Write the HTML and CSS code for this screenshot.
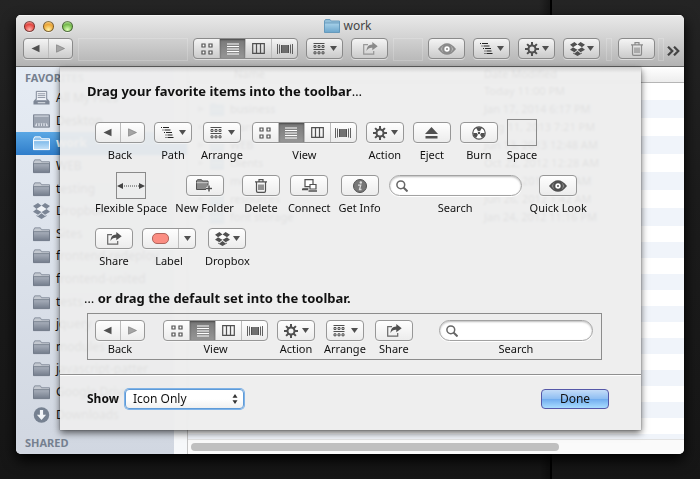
FILE: index.html
```html
<!DOCTYPE html>
<html lang="en">
<head>
<meta charset="utf-8">
<title>work</title>
<link rel="stylesheet" href="styles.css">
</head>
<body>
<svg class="defs" aria-hidden="true">
  <defs>
    <linearGradient id="steel" x1="0" y1="0" x2="0" y2="1"><stop offset="0" stop-color="#a9b0bc"/><stop offset="1" stop-color="#747d8c"/></linearGradient>
    <linearGradient id="sky" x1="0" y1="0" x2="0" y2="1"><stop offset="0" stop-color="#a8d2ea"/><stop offset="1" stop-color="#6ba5cb"/></linearGradient>
    <linearGradient id="pale" x1="0" y1="0" x2="0" y2="1"><stop offset="0" stop-color="#7db9ea"/><stop offset="1" stop-color="#c4e1f8"/></linearGradient>
  </defs>
  <symbol id="left" viewBox="0 0 9 9"><path d="M.5 4.500 8.500.8v7.400z" fill="currentColor"/></symbol>
  <symbol id="right" viewBox="0 0 9 9"><path d="M8.500 4.500.5.8v7.400z" fill="#a5a5a5" stroke="#777" stroke-width=".6"/></symbol>
  <symbol id="caret" viewBox="0 0 7 5"><path d="M0 0h7L3.500 5z" fill="currentColor"/></symbol>
  <symbol id="grid" viewBox="0 0 12 12"><path d="M1 1h3v3H1zM8 1h3v3H8zM1 8h3v3H1zM8 8h3v3H8z" fill="#fff" stroke="currentColor" stroke-width="1.200"/></symbol>
  <symbol id="list" viewBox="0 0 12 12"><path d="M0 1h12M0 3.500h12M0 6h12M0 8.500h12M0 11h12" stroke="currentColor"/></symbol>
  <symbol id="columns" viewBox="0 0 13 11"><path d="M.7.7h11.600v9.600H.7zM4.500.5v10M8.500.5v10" fill="none" stroke="currentColor" stroke-width="1.200"/></symbol>
  <symbol id="flow" viewBox="0 0 16 10"><path d="M.5 0v10M2.500.5v9M13.500.5v9M15.500 0v10" stroke="currentColor" stroke-width=".9"/><path d="M4 1h8v8H4z" fill="currentColor" opacity=".8"/><path d="M4.500 1v8M11.500 1v8" stroke="currentColor"/></symbol>
  <symbol id="arrange" viewBox="0 0 12 12"><path d="M.5.500h11M.5 6.500h11" stroke="currentColor"/><path d="M1 2.500h2v2H1zM5 2.500h2v2H5zM9 2.500h2v2H9zM1 8.800h2v2H1zM5 8.800h2v2H5zM9 8.800h2v2H9z" fill="none" stroke="currentColor"/></symbol>
  <symbol id="share" viewBox="0 0 16 13"><path d="M6 2.600H1.700v9.500h10V9" fill="none" stroke="currentColor" stroke-width="1.200" opacity=".85"/><path d="M10.300 0 15.700 4.200l-5.400 4V5.800C7.500 5.600 6 6.700 4.500 9 4.700 5.200 6.500 2.600 10.300 2.500z" fill="currentColor"/></symbol>
  <symbol id="eye" viewBox="0 0 18 12"><path d="M0 6C3 2 6 .2 9 .2S15 2 18 6c-3 4-6 5.800-9 5.800S3 10 0 6z" fill="currentColor"/><path d="M2.500 6C4 3.500 5 2.700 5.800 2.300A5 5 0 0 0 5.800 9.700C5 9.300 4 8.500 2.500 6zM15.500 6C14 3.500 13 2.700 12.200 2.300A5 5 0 0 1 12.200 9.700C13 9.300 14 8.500 15.500 6z" fill="#fff" opacity=".35"/><circle cx="9" cy="6" r="2.700" fill="#fff"/><circle cx="9" cy="6" r="1" fill="currentColor"/></symbol>
  <symbol id="path" viewBox="0 0 13 11"><path d="M0 .5h1M2 .5h6M1.500 3h1M3.500 3h6M3 5.500h1M5 5.500h6M4.500 8h1M6.500 8h5M4.500 10.500h1M6.500 10.500h6" stroke="#222" stroke-width="1.200"/></symbol>
  <symbol id="gear" viewBox="0 0 14 14"><path d="M7 0v3.500M7 10.500V14M0 7h3.500M10.500 7H14M2.100 2.100l2.400 2.400M9.500 9.500l2.400 2.400M11.900 2.100 9.500 4.500M4.500 9.500l-2.400 2.400" stroke="currentColor" stroke-width="2"/><circle cx="7" cy="7" r="3.500" fill="none" stroke="currentColor" stroke-width="2"/></symbol>
  <symbol id="dropbox" viewBox="0 0 16 15"><path d="M4.700 0 8 2.600 3.300 5.500 0 2.900zM11.300 0 8 2.600l4.700 2.900L16 2.900zM0 8.200l3.300-2.700L8 8.400 4.700 11zM16 8.200l-3.300-2.700L8 8.400l3.300 2.600zM8 9.600l3.300 2.600 1.400-.9v1L8 15l-4.700-2.700v-1l1.400.9z" fill="currentColor"/><path d="m3.300 5.500 4.700 2.900 4.700-2.900L8 2.600z" fill="#fff" opacity=".5"/></symbol>
  <symbol id="trash" viewBox="0 0 12 14"><path d="M0 2.800h12M4 2.500V.7h4v1.800M1.500 3v9q0 1.300 1.300 1.300h6.400q1.300 0 1.300-1.300V3M4 5.500v5.500M6 5.500v5.500M8 5.500v5.500" fill="none" stroke="currentColor" stroke-width="1.200"/></symbol>
  <symbol id="eject" viewBox="0 0 13 12"><path d="M6.500 0 13 7H0zM.5 9h12v2.500H.5z" fill="currentColor"/></symbol>
  <symbol id="burn" viewBox="0 0 14 14"><circle cx="7" cy="7" r="6.200" fill="#fff" stroke="currentColor" stroke-width="1.200"/><path d="M7 7 4.200 2A5.800 5.800 0 0 1 9.800 2zM7 7h5.800A5.800 5.800 0 0 1 10 12zM7 7H1.200A5.800 5.800 0 0 0 4 12z" fill="currentColor"/><circle cx="7" cy="7" r="1.700" fill="currentColor" stroke="#fff" stroke-width=".8"/></symbol>
  <symbol id="newfolder" viewBox="0 0 17 13"><path d="M.5 10.500V2l1-1.300h4L6.500 2h5.500v8.500z" fill="#8a8a8a" stroke="currentColor"/><path d="M.5 3.700H12" stroke="#ddd" stroke-width=".8"/><path d="M13 6.500v6M10 9.500h6" stroke="#fff" stroke-width="3"/><path d="M13 6.500v6M10 9.500h6" stroke="currentColor" stroke-width="1.500"/></symbol>
  <symbol id="connect" viewBox="0 0 15 13"><path d="M3 .7h8v7H3zM.5 9.800h6" fill="#fff" stroke="currentColor" stroke-width="1.200"/><path d="M8 5.500h6v4.500H8z" fill="#fff" stroke="currentColor" stroke-width="1.200"/><path d="M0 10.500h6M6.500 12h8.500" stroke="currentColor" stroke-width="1.400"/></symbol>
  <symbol id="info" viewBox="0 0 14 14"><circle cx="7" cy="7" r="6.500" fill="#777" stroke="currentColor"/><circle cx="7.800" cy="3.500" r="1.200" fill="#ddd"/><path d="M5 6.200h2.700L6.500 10.500h2" fill="none" stroke="#ddd" stroke-width="1.300"/></symbol>
  <symbol id="lens" viewBox="0 0 12 12"><circle cx="4.800" cy="4.800" r="3.900" fill="none" stroke="currentColor" stroke-width="1.500"/><path d="m7.500 7.500 4 4" stroke="currentColor" stroke-width="2"/></symbol>
  <symbol id="stretch" viewBox="0 0 28 8"><path d="M0 4 6 1v6zM28 4l-6-3v6z" fill="currentColor"/><path d="M5 4h18" stroke="currentColor" stroke-dasharray="1 1"/></symbol>
  <symbol id="updown" viewBox="0 0 6 10"><path d="M.5 3.800 3 0l2.500 3.800zM.5 6.200 3 10l2.500-3.800z" fill="currentColor"/></symbol>
  <symbol id="folder" viewBox="0 0 18 16"><path d="M.5 14.500V4L1.800 1.500h6L9 3.500h8.500v11z" fill="#c3c8d0" stroke="#858d9b"/><path d="M.5 5.500h17v9.500H.5z" fill="url(#steel)" stroke="#6c7584" stroke-width=".8"/></symbol>
  <symbol id="folder-open" viewBox="0 0 18 16"><path d="M.5 14.500V4L1.800 1.500h6L9 3.500h8.500v11z" fill="#8fc2ec" stroke="#fff"/><path d="M.5 5.500h17v9.500H.5z" fill="url(#pale)" stroke="#fff"/></symbol>
  <symbol id="folder-blue" viewBox="0 0 16 14"><path d="M.5 13V2L1.500.5h4.500L7.200 2h8.300v11z" fill="#93bfd9" stroke="#6a9cbd"/><path d="M.5 4h15v9.500H.5z" fill="url(#sky)" stroke="#5f94b8" stroke-width=".8"/></symbol>
  <symbol id="allfiles" viewBox="0 0 18 16"><path d="M3.500 10V1h11v9" fill="#eef1f6" stroke="#7b8493"/><path d="M5 3.500h8M5 5.500h8M5 7.500h8" stroke="#8e96a4"/><path d="M3 8.500.5 11.500v3.500h17v-3.500L15 8.500v2H3z" fill="#7e8796"/><path d="M5 13h8" stroke="#e5e9ef"/></symbol>
  <symbol id="desktop" viewBox="0 0 18 16"><path d="M.5 1.500h17v13H.5z" fill="#9ba3b0" stroke="#7a8392"/><path d="M1.500 2.800h15" stroke="#dde2ea"/><path d="m2 13.500 1.500-3h11l1.500 3z" fill="#dbe0e8"/><path d="M5 10.500v3M7.700 10.500v3M10.300 10.500v3M13 10.500v3" stroke="#7a8392"/></symbol>
  <symbol id="download" viewBox="0 0 18 18"><circle cx="9" cy="9" r="8.700" fill="#768191"/><path d="M7.200 3.500h3.600v5.200h3.400L9 14.500 3.800 8.700h3.400z" fill="#f2f5f8"/></symbol>
  <symbol id="more" viewBox="0 0 13 10"><path d="m1 .7 4.300 4.300L1 9.300M7 .7 11.300 5 7 9.300" fill="none" stroke="currentColor" stroke-width="2.200"/></symbol>
</svg>

<main class="window">
  <header class="chrome">
    <div class="titlebar">
      <div class="lights">
        <button class="light red" aria-label="Close"></button>
        <button class="light amber" aria-label="Minimize"></button>
        <button class="light green" aria-label="Zoom"></button>
      </div>
      <h1 class="title"><svg width="16" height="14"><use href="#folder-blue"/></svg>work</h1>
    </div>
    <div class="toolbar">
      <div class="seg nav">
        <button aria-label="Back"><svg width="9" height="9"><use href="#left"/></svg></button>
        <button aria-label="Forward"><svg width="9" height="9"><use href="#right"/></svg></button>
      </div>
      <div class="slot wide"></div>
      <div class="seg view">
        <button aria-label="Icons"><svg width="12" height="12"><use href="#grid"/></svg></button>
        <button class="on" aria-label="List"><svg width="12" height="12"><use href="#list"/></svg></button>
        <button aria-label="Columns"><svg width="13" height="11"><use href="#columns"/></svg></button>
        <button aria-label="Cover Flow"><svg width="16" height="10"><use href="#flow"/></svg></button>
      </div>
      <button class="btn menu" aria-label="Arrange"><svg width="12" height="12"><use href="#arrange"/></svg><svg width="7" height="5"><use href="#caret"/></svg></button>
      <button class="btn dim" aria-label="Share"><svg width="16" height="13"><use href="#share"/></svg></button>
      <div class="slot"></div>
      <button class="btn dim" aria-label="Quick Look"><svg width="18" height="12"><use href="#eye"/></svg></button>
      <button class="btn menu" aria-label="Path"><svg width="13" height="11"><use href="#path"/></svg><svg width="7" height="5"><use href="#caret"/></svg></button>
      <button class="btn menu" aria-label="Action"><svg width="14" height="14"><use href="#gear"/></svg><svg width="7" height="5"><use href="#caret"/></svg></button>
      <button class="btn menu" aria-label="Dropbox"><svg width="15" height="14"><use href="#dropbox"/></svg><svg width="7" height="5"><use href="#caret"/></svg></button>
      <div class="slot thin"></div>
      <button class="btn dim" aria-label="Delete"><svg width="12" height="14"><use href="#trash"/></svg></button>
      <div class="slot thin last"></div>
      <button class="more" aria-label="More"><svg width="13" height="10"><use href="#more"/></svg></button>
    </div>
  </header>

  <div class="content">
    <nav class="sidebar">
      <h2>FAVORITES</h2>
      <ul>
        <li><svg><use href="#allfiles"/></svg>All My Files</li>
        <li><svg><use href="#desktop"/></svg>Desktop</li>
        <li class="current"><svg><use href="#folder-open"/></svg>work</li>
        <li><svg><use href="#folder"/></svg>WEB</li>
        <li><svg><use href="#folder"/></svg>testing</li>
        <li class="slate"><svg><use href="#dropbox"/></svg>Dropbox</li>
        <li><svg><use href="#folder"/></svg>Sites</li>
        <li><svg><use href="#folder"/></svg>frontend-redeploy</li>
        <li><svg><use href="#folder"/></svg>frontend-united</li>
        <li><svg><use href="#folder"/></svg>tests</li>
        <li><svg><use href="#folder"/></svg>jquery</li>
        <li><svg><use href="#folder"/></svg>modules</li>
        <li><svg><use href="#folder"/></svg>javascript-patter</li>
        <li><svg><use href="#folder"/></svg>Google Drive</li>
        <li><svg><use href="#download"/></svg>Downloads</li>
      </ul>
      <h2>SHARED</h2>
    </nav>
    <section class="files">
      <div class="rows">
        <table>
          <thead><tr><th>Name</th><th>Date Modified</th></tr></thead>
          <tbody>
            <tr><td></td><td>Today 11:00 PM</td></tr>
            <tr><td><span class="file"><svg width="6" height="6"><use href="#right"/></svg><svg width="14" height="13"><use href="#folder-blue"/></svg>business</span></td><td>Jan 17, 2014 6:17 PM</td></tr>
            <tr><td><span class="file"><svg width="6" height="6"><use href="#right"/></svg><svg width="14" height="13"><use href="#folder-blue"/></svg>learn</span></td><td>Aug 11, 2013 7:21 PM</td></tr>
            <tr><td><span class="file"><svg width="6" height="6"><use href="#right"/></svg><svg width="14" height="13"><use href="#folder-blue"/></svg>WEB</span></td><td>Jun 13, 2013 12:48 AM</td></tr>
            <tr><td><span class="file"><svg width="6" height="6"><use href="#right"/></svg><svg width="14" height="13"><use href="#folder-blue"/></svg>clients</span></td><td>Oct 22, 2012 12:28 AM</td></tr>
            <tr><td><span class="file"><svg width="6" height="6"><use href="#right"/></svg><svg width="14" height="13"><use href="#folder-blue"/></svg>media</span></td><td>Jun 26, 2012 1:45 AM</td></tr>
            <tr><td><span class="file"><svg width="6" height="6"><use href="#right"/></svg><svg width="14" height="13"><use href="#folder-blue"/></svg>resources</span></td><td>Jun 26, 2012 1:42 AM</td></tr>
            <tr><td><span class="file"><svg width="6" height="6"><use href="#right"/></svg><svg width="14" height="13"><use href="#folder-blue"/></svg>font storage</span></td><td>Jan 24, 2012 11:16 PM</td></tr>
          </tbody>
        </table>
        <div class="stripes"></div>
      </div>
      <div class="scroll"><div class="thumb"></div></div>
    </section>

    <section class="sheet">
      <div class="palette">
        <h2>Drag your favorite items into the toolbar<span class="thin-text">…</span></h2>
        <div class="line">
          <div class="item"><div class="seg nav"><button aria-label="Back"><svg width="9" height="9"><use href="#left"/></svg></button><button aria-label="Forward"><svg width="9" height="9"><use href="#right"/></svg></button></div><span>Back</span></div>
          <div class="item"><button class="btn menu" aria-label="Path"><svg width="13" height="11"><use href="#path"/></svg><svg width="7" height="5"><use href="#caret"/></svg></button><span>Path</span></div>
          <div class="item"><button class="btn menu" aria-label="Arrange"><svg width="12" height="12"><use href="#arrange"/></svg><svg width="7" height="5"><use href="#caret"/></svg></button><span>Arrange</span></div>
          <div class="item"><div class="seg view"><button aria-label="Icons"><svg width="12" height="12"><use href="#grid"/></svg></button><button class="on" aria-label="List"><svg width="12" height="12"><use href="#list"/></svg></button><button aria-label="Columns"><svg width="13" height="11"><use href="#columns"/></svg></button><button aria-label="Cover Flow"><svg width="16" height="10"><use href="#flow"/></svg></button></div><span>View</span></div>
          <div class="item"><button class="btn menu" aria-label="Action"><svg width="14" height="14"><use href="#gear"/></svg><svg width="7" height="5"><use href="#caret"/></svg></button><span>Action</span></div>
          <div class="item"><button class="btn" aria-label="Eject"><svg width="13" height="12"><use href="#eject"/></svg></button><span>Eject</span></div>
          <div class="item"><button class="btn" aria-label="Burn"><svg width="14" height="14"><use href="#burn"/></svg></button><span>Burn</span></div>
          <div class="item"><div class="space"></div><span>Space</span></div>
        </div>
        <div class="line tight">
          <div class="item"><div class="space"><svg width="28" height="8"><use href="#stretch"/></svg></div><span>Flexible Space</span></div>
          <div class="item"><button class="btn" aria-label="New Folder"><svg width="17" height="13"><use href="#newfolder"/></svg></button><span>New Folder</span></div>
          <div class="item"><button class="btn" aria-label="Delete"><svg width="12" height="14"><use href="#trash"/></svg></button><span>Delete</span></div>
          <div class="item"><button class="btn" aria-label="Connect"><svg width="15" height="13"><use href="#connect"/></svg></button><span>Connect</span></div>
          <div class="item"><button class="btn" aria-label="Get Info"><svg width="14" height="14"><use href="#info"/></svg></button><span>Get Info</span></div>
          <label class="item"><span class="search"><svg width="12" height="12"><use href="#lens"/></svg><input type="text"></span><span>Search</span></label>
          <div class="item"><button class="btn" aria-label="Quick Look"><svg width="18" height="12"><use href="#eye"/></svg></button><span>Quick Look</span></div>
        </div>
        <div class="line">
          <div class="item"><button class="btn" aria-label="Share"><svg width="16" height="13"><use href="#share"/></svg></button><span>Share</span></div>
          <div class="item"><div class="seg label"><button aria-label="Red label"><i class="pill"></i></button><button aria-label="Choose label"><svg width="7" height="5"><use href="#caret"/></svg></button></div><span>Label</span></div>
          <div class="item"><button class="btn menu" aria-label="Dropbox"><svg width="15" height="14"><use href="#dropbox"/></svg><svg width="7" height="5"><use href="#caret"/></svg></button><span>Dropbox</span></div>
        </div>
        <h2 class="second"><span class="thin-text">…</span> or drag the default set into the toolbar.</h2>
        <div class="line default">
          <div class="item"><div class="seg nav"><button aria-label="Back"><svg width="9" height="9"><use href="#left"/></svg></button><button aria-label="Forward"><svg width="9" height="9"><use href="#right"/></svg></button></div><span>Back</span></div>
          <div class="gap"></div>
          <div class="item"><div class="seg view"><button aria-label="Icons"><svg width="12" height="12"><use href="#grid"/></svg></button><button class="on" aria-label="List"><svg width="12" height="12"><use href="#list"/></svg></button><button aria-label="Columns"><svg width="13" height="11"><use href="#columns"/></svg></button><button aria-label="Cover Flow"><svg width="16" height="10"><use href="#flow"/></svg></button></div><span>View</span></div>
          <div class="item"><button class="btn menu" aria-label="Action"><svg width="14" height="14"><use href="#gear"/></svg><svg width="7" height="5"><use href="#caret"/></svg></button><span>Action</span></div>
          <div class="item"><button class="btn menu" aria-label="Arrange"><svg width="12" height="12"><use href="#arrange"/></svg><svg width="7" height="5"><use href="#caret"/></svg></button><span>Arrange</span></div>
          <div class="item"><button class="btn" aria-label="Share"><svg width="16" height="13"><use href="#share"/></svg></button><span>Share</span></div>
          <div class="gap grow"></div>
          <label class="item"><span class="search long"><svg width="12" height="12"><use href="#lens"/></svg><input type="text"></span><span>Search</span></label>
        </div>
      </div>
      <footer class="actions">
        <label for="show">Show</label>
        <span class="select"><select id="show"><option>Icon Only</option><option>Icon and Text</option><option>Text Only</option></select><svg width="6" height="10"><use href="#updown"/></svg></span>
        <button class="done">Done</button>
      </footer>
    </section>
  </div>
</main>
</body>
</html>
```

FILE: styles.css
```css
* { box-sizing: border-box; }

body {
  margin: 0;
  min-height: 100vh;
  padding: 15px 16px 25px;
  display: flex;
  background:
    linear-gradient(to right, transparent 77%, #0006 78.6%, #000 78.6%, #000 78.8%, transparent 78.8%),
    linear-gradient(#242424, #1c1c1c 40%, #161616);
  font: 11px/14px "Noto Sans", sans-serif;
  color: #111;
}

h1, h2, ul { margin: 0; padding: 0; }
svg { display: block; flex: none; }
.defs { position: absolute; width: 0; height: 0; }
button { padding: 0; border: 0; background: none; font: inherit; color: inherit; }

.window {
  flex: 1;
  display: flex;
  flex-direction: column;
  border-radius: 5px;
  overflow: hidden;
  background: #fff;
  box-shadow: 0 0 1px #000, 0 6px 14px #000;
}

/* Title bar and toolbar */
.chrome {
  height: 52px;
  flex: none;
  background: linear-gradient(#e9e9e9, #d2d2d2 45%, #b3b3b3);
  border-bottom: 1px solid #686868;
  box-shadow: inset 0 1px #f6f6f6;
}
.titlebar {
  height: 22px;
  padding: 0 8px;
  display: grid;
  grid-template-columns: 1fr auto 1fr;
  align-items: center;
}
.lights { display: flex; gap: 8px; }
.light {
  width: 11px;
  height: 11px;
  border-radius: 50%;
  border: 1px solid #0007;
  box-shadow: 0 1px #fff8;
}
.red { background: radial-gradient(circle at 50% 85%, #ffb0a8, #e2453f 60%, #f7b3ad); }
.amber { background: radial-gradient(circle at 50% 85%, #fff0a0, #eba536 60%, #fbdca4); }
.green { background: radial-gradient(circle at 50% 85%, #dcffb4, #74b94c 60%, #c9ebb0); }
.title {
  display: flex;
  align-items: center;
  gap: 3px;
  margin-right: 4px;
  font-size: 12px;
  font-weight: 400;
  color: #444;
}
.toolbar {
  display: flex;
  align-items: flex-start;
  gap: 8px;
  padding: 1px 4px 0 7px;
}
.slot {
  width: 30px;
  height: 23px;
  margin: 0 -3px;
  border: 1px solid #ffffff30;
}
.slot.wide { flex: 1; }
.slot.thin { width: 6px; margin: 0 -2px; }
.slot.last { margin: 0 -5px; }
.more { color: #444; margin: 8px 0 0; }

.btn, .seg {
  height: 21px;
  border: 1px solid #979797;
  border-radius: 4px;
  background: linear-gradient(#fefefe, #ececec);
  box-shadow: 0 1px #ffffff80;
  color: #505050;
  display: flex;
  align-items: center;
  flex: none;
}
.btn { width: 38px; justify-content: center; }
.menu { justify-content: space-between; padding: 0 5px 0 6px; }
.toolbar .btn { width: 37px; }
.toolbar .btn, .toolbar .seg { background: linear-gradient(#f4f4f4, #cbcbcb); border-color: #8a8a8a; }
.toolbar .dim { color: #8a8a8a; }
.seg button {
  flex: 1;
  height: 19px;
  display: flex;
  align-items: center;
  justify-content: center;
}
.seg button + button { border-left: 1px solid #bcbcbc; }
.seg .on { background: linear-gradient(#787878, #969696); color: #fff; box-shadow: inset 0 1px 2px #0006; }
.nav { width: 50px; }
.view { width: 105px; }
.label { width: 54px; }
.label button + button { flex: 0 0 17px; }
.pill { width: 17px; height: 11px; border: 1px solid #b0645c; border-radius: 5px; background: #fb8d82; }

/* Window body */
.content { flex: 1; display: flex; position: relative; }
.sidebar {
  width: 172px;
  flex: none;
  display: flex;
  flex-direction: column;
  border-right: 1px solid #c4c4c4;
  background:
    linear-gradient(#f6f8fa, #f6f8fa) right / 13px 100% no-repeat,
    linear-gradient(#e6ecf4, #d1d7e1);
}
.sidebar h2 { padding: 4px 9px 2px; font-size: 11px; color: #75808f; }
.sidebar h2:last-child { padding: 10px 9px 4px; }
.sidebar ul {
  flex: 1;
  list-style: none;
  display: grid;
  grid-auto-rows: 1fr;
}
.sidebar li {
  display: flex;
  align-items: center;
  gap: 6px;
  padding-left: 17px;
  font-size: 12px;
}
.sidebar li svg { width: 17px; height: 16px; }
.slate svg { color: #7b8595; }
.current { background: linear-gradient(#5aa7e4, #2f7dca); color: #fff; font-weight: 700; }

.files { flex: 1; display: flex; flex-direction: column; }
.rows { flex: 1; display: flex; flex-direction: column; }
table { border-collapse: collapse; width: 100%; }
th {
  height: 15px;
  padding: 0;
  font-weight: 400;
  text-align: left;
  background: linear-gradient(#fff, #ededed);
  border-bottom: 1px solid #b5b5b5;
}
th:first-child { width: 296px; padding-left: 46px; }
td { height: 18px; padding: 0; }
tbody tr:nth-child(even) { background: #f0f4fa; }
.file { display: flex; align-items: center; gap: 6px; padding-left: 10px; }
.stripes { flex: 1; background: repeating-linear-gradient(#fff 0 16px, #f0f4fa 16px 32px); }
.scroll { height: 15px; border-top: 1px solid #e2e2e2; background: #fafafa; padding: 3px; }
.thumb { width: 75%; height: 8px; border-radius: 4px; background: #c0c0c0; }

/* Customise sheet */
.sheet {
  position: absolute;
  top: 0;
  left: 44px;
  right: 43px;
  background: linear-gradient(#0000001f, transparent 6px), #edededf0;
  backdrop-filter: blur(1px);
  box-shadow: 0 3px 7px #0009, 0 0 1px #0008;
}
.palette { padding: 17px 39px 14px 27px; }
.sheet h2 { margin-bottom: 21px; font-size: 13px; line-height: 14px; }
.sheet h2.second { margin: 13px 0 8px -3px; }
.thin-text { font-weight: 400; }
.line {
  display: flex;
  gap: 9px;
  padding-left: 8px;
  height: 53px;
}
.line.tight { gap: 8px; }
.item {
  display: flex;
  flex-direction: column;
  align-items: center;
  text-align: center;
  white-space: nowrap;
}
.item > :first-child { margin: 3px 0 5px; }
.item > .space { margin: 0 0 2px; }
.space {
  width: 30px;
  height: 27px;
  border: 1px solid #8a8a8a;
  display: flex;
  align-items: center;
  justify-content: center;
  color: #444;
}
.search {
  width: 133px;
  height: 21px;
  display: flex;
  align-items: center;
  gap: 3px;
  padding: 0 6px;
  border: 1px solid #a2a2a2;
  border-radius: 11px;
  background: #fff;
  box-shadow: inset 0 1px 2px #0004, 0 1px #fff;
  color: #666;
}
.search.long { width: 154px; }
.search input { flex: 1; min-width: 0; border: 0; outline: 0; background: none; font: inherit; }
.default {
  height: 47px;
  padding: 3px 8px 0 7px;
  border: 1px solid #8c8c8c;
}
.default .item > :first-child { margin-bottom: 1px; }
.gap.grow { flex: 1; }

.actions {
  display: flex;
  align-items: center;
  padding: 14px 32px 21px 27px;
  border-top: 1px solid #8f8f8f;
  box-shadow: inset 0 1px #fff;
  font-size: 12px;
}
.actions label { font-weight: 700; margin-right: 6px; }
.select { display: grid; align-items: center; }
.select > * { grid-area: 1 / 1; }
.select svg { justify-self: end; margin-right: 6px; pointer-events: none; color: #333; }
select {
  appearance: none;
  width: 119px;
  height: 20px;
  padding: 0 7px;
  border: 1px solid #5f9bd8;
  border-radius: 4px;
  background: linear-gradient(#fff 50%, #f0f0f0);
  box-shadow: 0 0 0 1px #7fb2e6;
  font: inherit;
  color: #111;
}
.done {
  width: 68px;
  height: 20px;
  margin-left: auto;
  border: 1px solid #5558a8;
  border-radius: 4px;
  background: linear-gradient(#c3dcf8, #8dbdf2 50%, #6fabee 50%, #a9dcff);
}
```
